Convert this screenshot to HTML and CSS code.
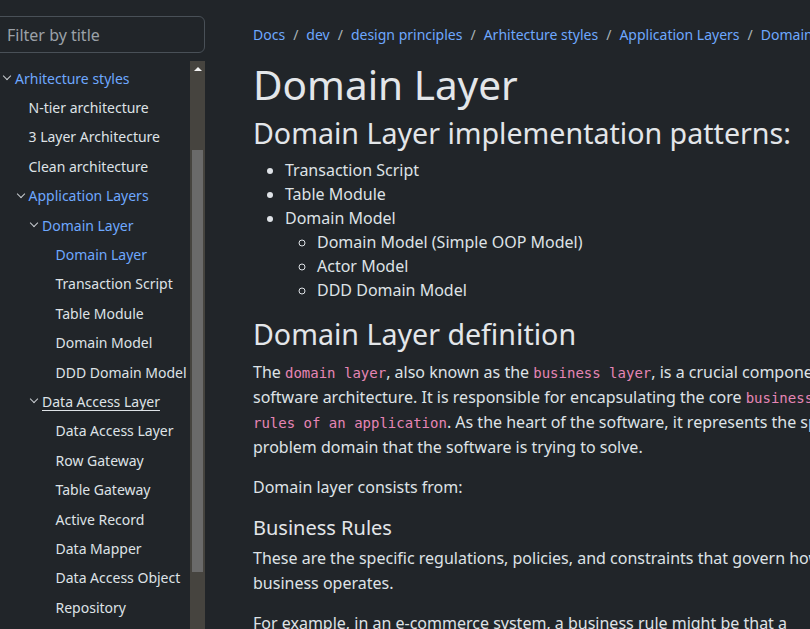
FILE: index.html
```html
<!DOCTYPE html>
<html lang="en">
<head>
<meta charset="utf-8">
<title>Domain Layer</title>
<link rel="stylesheet" href="styles.css">
</head>
<body>
<div class="page">
  <aside class="sidebar">
    <div class="search">
      <input class="search-input" type="search" placeholder="Filter by title">
    </div>
    <div class="nav-wrap">
      <nav class="tree">
        <ul class="lvl lvl0">
          <li class="item">
            <a class="link active-section"><span class="chev"></span>Arhitecture styles</a>
            <ul class="lvl lvl1">
              <li class="item"><a class="link">N-tier architecture</a></li>
              <li class="item"><a class="link">3 Layer Architecture</a></li>
              <li class="item"><a class="link">Clean architecture</a></li>
              <li class="item">
                <a class="link active-section with-chev"><span class="chev"></span>Application Layers</a>
                <ul class="lvl lvl2">
                  <li class="item">
                    <a class="link active-section with-chev"><span class="chev"></span>Domain Layer</a>
                    <ul class="lvl lvl3">
                      <li class="item"><a class="link current">Domain Layer</a></li>
                      <li class="item"><a class="link">Transaction Script</a></li>
                      <li class="item"><a class="link">Table Module</a></li>
                      <li class="item"><a class="link">Domain Model</a></li>
                      <li class="item"><a class="link">DDD Domain Model</a></li>
                    </ul>
                  </li>
                  <li class="item">
                    <a class="link with-chev hover"><span class="chev"></span><span class="u">Data Access Layer</span></a>
                    <ul class="lvl lvl3">
                      <li class="item"><a class="link">Data Access Layer</a></li>
                      <li class="item"><a class="link">Row Gateway</a></li>
                      <li class="item"><a class="link">Table Gateway</a></li>
                      <li class="item"><a class="link">Active Record</a></li>
                      <li class="item"><a class="link">Data Mapper</a></li>
                      <li class="item"><a class="link">Data Access Object</a></li>
                      <li class="item"><a class="link">Repository</a></li>
                    </ul>
                  </li>
                </ul>
              </li>
            </ul>
          </li>
        </ul>
      </nav>
      <div class="scrollbar">
        <div class="sb-arrow"></div>
        <div class="sb-space"></div>
        <div class="sb-thumb"></div>
      </div>
    </div>
  </aside>

  <main class="content">
    <nav class="breadcrumb">
      <a>Docs</a><span class="sep">/</span><a>dev</a><span class="sep">/</span><a>design principles</a><span class="sep">/</span><a>Arhitecture styles</a><span class="sep">/</span><a>Application Layers</a><span class="sep">/</span><a>Domain Layer</a>
    </nav>
    <h1 class="title">Domain Layer</h1>
    <h2 class="h2 first">Domain Layer implementation patterns:</h2>
    <ul class="bullets">
      <li>Transaction Script</li>
      <li>Table Module</li>
      <li>Domain Model
        <ul class="sub">
          <li>Domain Model (Simple OOP Model)</li>
          <li>Actor Model</li>
          <li>DDD Domain Model</li>
        </ul>
      </li>
    </ul>
    <h2 class="h2">Domain Layer definition</h2>
    <p class="para">The <code>domain layer</code>, also known as the <code>business layer</code>, is a crucial component of software architecture. It is responsible for encapsulating the core <code>business rules of an application</code>. As the heart of the software, it represents the specific problem domain that the software is trying to solve.</p>
    <p class="para">Domain layer consists from:</p>
    <h3 class="h3">Business Rules</h3>
    <p class="para">These are the specific regulations, policies, and constraints that govern how a business operates.</p>
    <p class="para">For example, in an e-commerce system, a business rule might be that a customer cannot place an order without a valid payment method.</p>
  </main>
</div>
</body>
</html>
```

FILE: styles.css
```css
html, body {
  margin: 0;
  padding: 0;
  background: #212529;
  overflow: hidden;
  height: 100%;
}

body {
  font-family: "Noto Sans", "Open Sans", sans-serif;
  color: #dee2e6;
  font-size: 16px;
}

a { color: #6ea8fe; text-decoration: none; }

.page {
  display: flex;
  align-items: flex-start;
  margin-left: -10px;
  height: 100%;
}

/* Sidebar */
.sidebar {
  width: 215px;
  flex: 0 0 215px;
  display: flex;
  flex-direction: column;
  height: 100%;
}

.search {
  padding: 16px 0 8px 0;
}

.search-input {
  box-sizing: border-box;
  width: 215px;
  height: 37px;
  margin: 0;
  background: #212529;
  border: 1px solid #495057;
  border-radius: 6px;
  padding: 0 0 0 16px;
  font-family: "Noto Sans", "Open Sans", sans-serif;
  font-size: 16px;
  color: #dee2e6;
  outline: none;
}

.search-input::placeholder { color: #9ba1a8; }

.nav-wrap {
  display: flex;
  flex: 1;
  min-height: 0;
}

.tree {
  flex: 1;
  padding-left: 11px;
  padding-top: 2.5px;
  overflow: hidden;
}

.lvl {
  list-style: none;
  margin: 0;
  padding: 0;
}

.lvl1, .lvl2, .lvl3 { padding-left: 13.5px; }

.link {
  display: flex;
  align-items: center;
  height: 29.4px;
  font-size: 14px;
  color: #dee2e6;
  white-space: nowrap;
  padding-left: 14px;
}

.link.with-chev, .lvl0 > .item > .link { padding-left: 0; }

.link.active-section, .link.current { color: #6ea8fe; }

.chev {
  display: inline-block;
  width: 14px;
  height: 10px;
  position: relative;
  flex: 0 0 14px;
}
.chev::before {
  content: "";
  position: absolute;
  left: 3px;
  top: 0px;
  width: 5px;
  height: 5px;
  border-right: 1px solid #c8ccd0;
  border-bottom: 1px solid #c8ccd0;
  transform: rotate(45deg);
}

.u { text-decoration: underline; text-underline-offset: 3px; }

/* Fake scrollbar */
.scrollbar {
  width: 15px;
  flex: 0 0 15px;
  background: #46443f;
  display: flex;
  flex-direction: column;
  align-items: center;
}
.sb-arrow {
  margin-top: 6px;
  width: 0;
  height: 0;
  border-left: 4px solid transparent;
  border-right: 4px solid transparent;
  border-bottom: 4px solid #f2f2f2;
}
.sb-space { height: 79px; }
.sb-thumb {
  width: 11px;
  height: 422px;
  background: #6a6a6a;
}

/* Content */
.content {
  margin-left: 48px;
  width: 608px;
  flex: 0 0 608px;
}

.breadcrumb {
  white-space: nowrap;
  font-size: 14px;
  padding-top: 25px;
  line-height: 20px;
}
.breadcrumb .sep {
  color: rgba(222, 226, 230, 0.75);
  padding: 0 8px;
}

.title {
  font-size: 40.5px;
  font-weight: 400;
  color: #e3e6e9;
  margin: 16px 0 0 0;
  line-height: 48px;
}

.h2 {
  font-size: 28.6px;
  font-weight: 400;
  color: #e3e6e9;
  line-height: 34px;
  margin: 15px 0 9px 0;
}
.h2.first { margin-top: 7px; margin-bottom: 8px; }

.bullets {
  margin: 0;
  padding-left: 32px;
  line-height: 24px;
}
.bullets .sub {
  margin: 0;
  padding-left: 32px;
  list-style-type: circle;
}

.para {
  margin: 0 0 15px 0;
  line-height: 25px;
}

code {
  font-family: "DejaVu Sans Mono", "Liberation Mono", monospace;
  font-size: 14px;
  line-height: 1;
  color: #e685b5;
}

.h3 {
  font-size: 20px;
  font-weight: 400;
  color: #e3e6e9;
  margin: 0 0 5px 0;
  line-height: 26px;
}
```
